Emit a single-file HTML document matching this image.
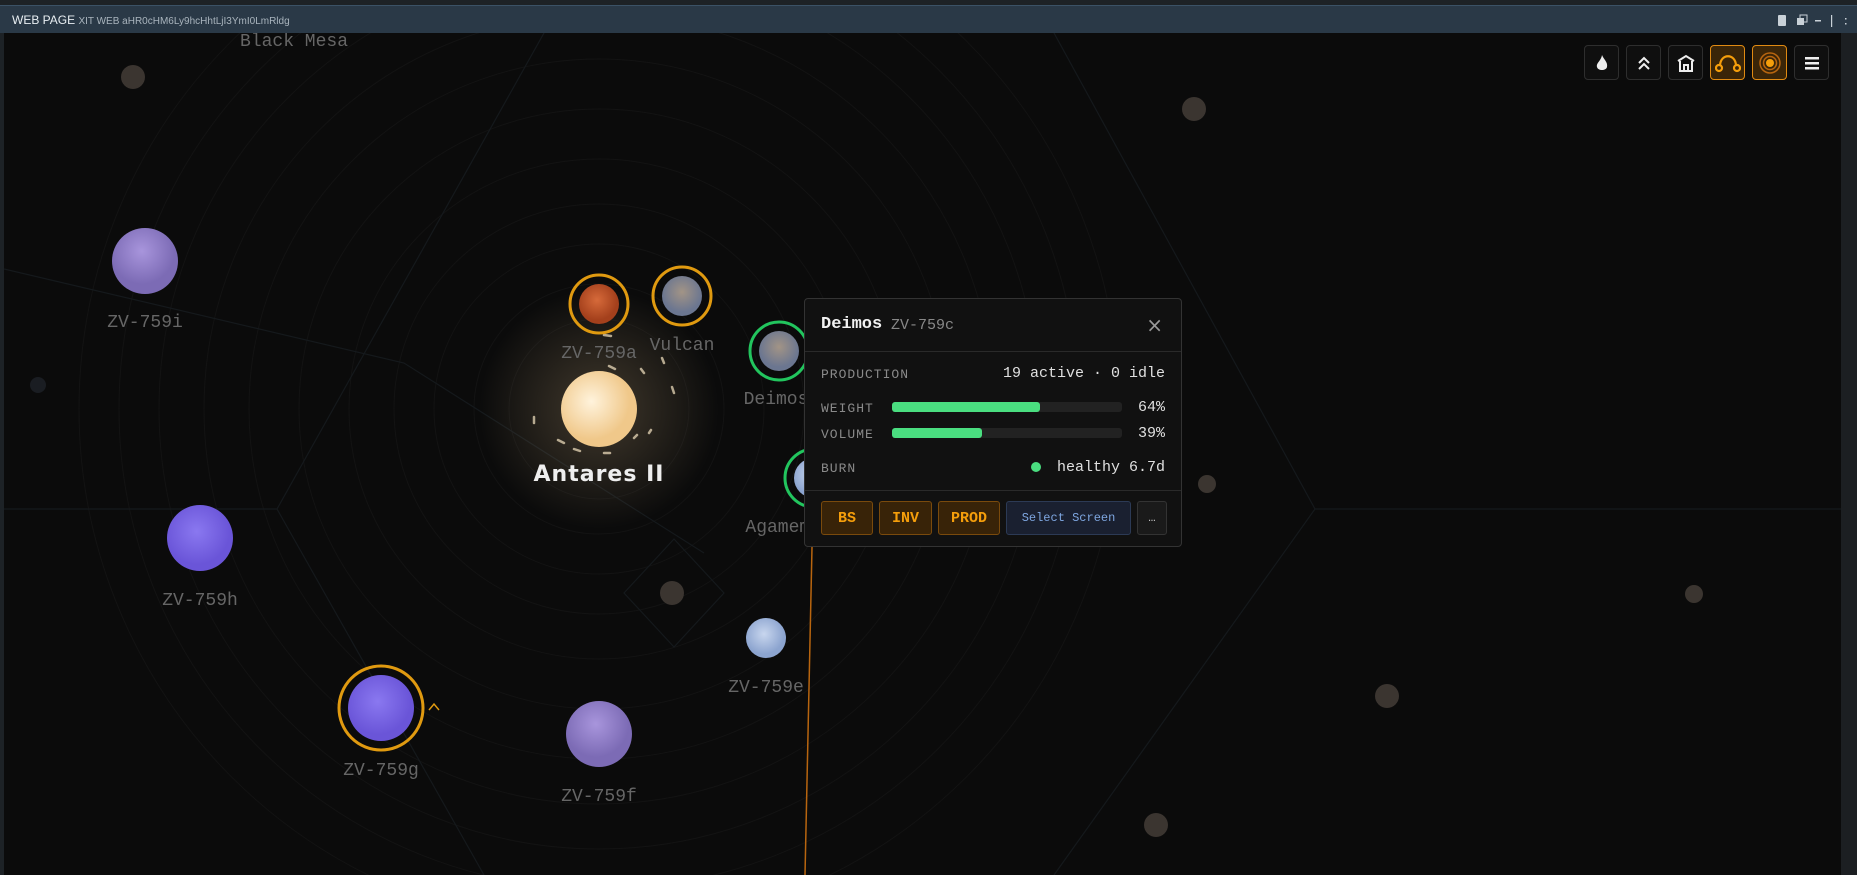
<!DOCTYPE html>
<html><head><meta charset="utf-8"><style>
*{margin:0;padding:0;box-sizing:border-box}
html,body{width:1857px;height:875px;overflow:hidden}
body{background:#1d2226;font-family:"Liberation Mono",monospace;position:relative}
.tb{position:absolute;left:0;top:5px;width:1857px;height:28px;background:#2a3947;border-top:1px solid #3b5266}
.tb .t{position:absolute;left:12px;top:7px;font-family:"Liberation Sans",sans-serif;font-size:12px;color:#e8eef2}
.tb .t small{font-size:10px;color:#a9b4bd}
.map{position:absolute;left:4px;top:33px;width:1837px;height:842px;background:#0b0b0b;overflow:hidden}
.sb{position:absolute;left:1841px;top:33px;width:16px;height:842px;background:#1c1f22}
.lbl{position:absolute;transform:translateX(-50%);font-size:18px;color:#666;white-space:nowrap}
.btn{position:absolute;top:45px;width:35px;height:35px;border:1px solid #2e2e2e;border-radius:4px;background:#0f0f0f;display:flex;align-items:center;justify-content:center}
.btn.on{border-color:#e08a12;background:#3a2508}
.pop{position:absolute;left:804px;top:298px;width:378px;height:249px;background:#111;border:1px solid #333;border-radius:4px;color:#ddd}
.pop .h{height:53px;border-bottom:1px solid #2a2a2a;position:relative}
.k{position:absolute;font-size:13px;color:#8a8a8a;letter-spacing:1px}
.v{position:absolute;font-size:15px;color:#e0e0e0;right:16px}
.bar{position:absolute;left:87px;width:230px;height:10px;background:#222;border-radius:3px}
.bar i{display:block;height:10px;background:#4ade80;border-radius:3px}
.b{position:absolute;top:202px;height:34px;border:1px solid #7a4a0c;background:#382308;color:#f59e0b;font-weight:bold;font-size:15px;display:flex;align-items:center;justify-content:center;border-radius:3px}
</style></head><body>
<div class="tb"><div class="t">WEB PAGE <small>XIT WEB aHR0cHM6Ly9hcHhtLjI3YmI0LmRldg</small></div>
<svg style="position:absolute;left:1775px;top:8px" width="80" height="14" fill="#c9d1d8"><rect x="3" y="1" width="8" height="11" rx="1"/><rect x="22" y="4" width="7" height="7"/><rect x="25" y="1" width="7" height="7" fill="none" stroke="#c9d1d8"/><rect x="40" y="6" width="6" height="1.5"/><rect x="56" y="1" width="1.2" height="12"/><rect x="70" y="4" width="1.5" height="1.5"/><rect x="70" y="9" width="1.5" height="1.5"/></svg></div>
<div class="map">
<svg width="1837" height="842" style="position:absolute;left:0;top:0">
<defs>
<radialGradient id="glow"><stop offset="0" stop-color="#ffd9a0" stop-opacity=".22"/><stop offset="1" stop-color="#ffd9a0" stop-opacity="0"/></radialGradient>
<radialGradient id="star" cx=".4" cy=".4"><stop offset="0" stop-color="#fff3dc"/><stop offset="1" stop-color="#f0c88a"/></radialGradient>
<radialGradient id="pu" cx=".45" cy=".35"><stop offset="0" stop-color="#a895dc"/><stop offset="1" stop-color="#7c6bb5"/></radialGradient>
<radialGradient id="bl" cx=".45" cy=".4"><stop offset="0" stop-color="#8a78f0"/><stop offset="1" stop-color="#6a55d8"/></radialGradient>
<radialGradient id="rd" cx=".45" cy=".4"><stop offset="0" stop-color="#d66a3a"/><stop offset="1" stop-color="#a4401c"/></radialGradient>
<radialGradient id="gr" cx=".5" cy=".4"><stop offset="0" stop-color="#a29486"/><stop offset="1" stop-color="#6b7690"/></radialGradient>
<radialGradient id="lb" cx=".45" cy=".4"><stop offset="0" stop-color="#c8d6ee"/><stop offset="1" stop-color="#8ca4cf"/></radialGradient>
</defs>
<g fill="none" stroke="#131313" stroke-width="1">
<circle cx="595" cy="376" r="90"/><circle cx="595" cy="376" r="125"/><circle cx="595" cy="376" r="165"/><circle cx="595" cy="376" r="205"/><circle cx="595" cy="376" r="250"/><circle cx="595" cy="376" r="300"/><circle cx="595" cy="376" r="350"/><circle cx="595" cy="376" r="395"/><circle cx="595" cy="376" r="440"/><circle cx="595" cy="376" r="480"/><circle cx="595" cy="376" r="520"/>
</g>
<g fill="none" stroke="#15191c" stroke-width="1.2">
<path d="M0 476 H273 L540 0"/><path d="M273 476 L480 842"/><path d="M0 236 L400 330 L700 520"/><path d="M1050 0 L1311 476 L1050 842"/><path d="M1311 476 H1837"/>
<path d="M670 506 L720 560 L670 614 L620 560 Z"/>
</g>
<circle cx="595" cy="376" r="120" fill="url(#glow)"/>
<circle cx="595" cy="376" r="38" fill="url(#star)"/>
<g stroke="#e8d8b8" stroke-width="2.5" stroke-linecap="round" opacity=".75"><path d="M605 333 l6 3"/><path d="M670 360 l-2 -6"/><path d="M640 340 l-3 -4"/><path d="M530 390 l0 -6"/><path d="M570 416 l6 2"/><path d="M600 420 l6 0"/><path d="M630 405 l3 -3"/><path d="M645 400 l2 -3"/><path d="M560 410 l-6 -3"/><path d="M600 302 l7 1"/><path d="M660 330 l-2 -5"/></g>
<g fill="#3b3530"><circle cx="129" cy="44" r="12"/><circle cx="1190" cy="76" r="12"/><circle cx="1203" cy="451" r="9"/><circle cx="1690" cy="561" r="9"/><circle cx="1383" cy="663" r="12"/><circle cx="1152" cy="792" r="12"/><circle cx="668" cy="560" r="12"/></g>
<circle cx="34" cy="352" r="8" fill="#1a1d22"/>
<circle cx="141" cy="228" r="33" fill="url(#pu)"/>
<circle cx="196" cy="505" r="33" fill="url(#bl)"/>
<circle cx="377" cy="675" r="33" fill="url(#bl)"/><circle cx="377" cy="675" r="42" fill="none" stroke="#e09a10" stroke-width="3"/>
<circle cx="595" cy="701" r="33" fill="url(#pu)"/>
<circle cx="762" cy="605" r="20" fill="url(#lb)"/>
<circle cx="595" cy="271" r="20" fill="url(#rd)"/><circle cx="595" cy="271" r="29" fill="none" stroke="#e09a10" stroke-width="3"/>
<circle cx="678" cy="263" r="20" fill="url(#gr)"/><circle cx="678" cy="263" r="29" fill="none" stroke="#e09a10" stroke-width="3"/>
<circle cx="775" cy="318" r="20" fill="url(#gr)"/><circle cx="775" cy="318" r="29" fill="none" stroke="#22c55e" stroke-width="3"/>
<circle cx="810" cy="445" r="20" fill="url(#lb)"/><circle cx="810" cy="445" r="29" fill="none" stroke="#22c55e" stroke-width="3"/>
<path d="M425 677 l5 -6 l5 6" fill="none" stroke="#e09a10" stroke-width="1.5"/>
<path d="M808 514 L801 842" stroke="#b8650f" stroke-width="1.5"/>
</svg>
<div class="lbl" style="left:290px;top:-1px">Black Mesa</div>
<div class="lbl" style="left:141px;top:280px">ZV-759i</div>
<div class="lbl" style="left:196px;top:558px">ZV-759h</div>
<div class="lbl" style="left:377px;top:728px">ZV-759g</div>
<div class="lbl" style="left:595px;top:754px">ZV-759f</div>
<div class="lbl" style="left:762px;top:645px">ZV-759e</div>
<div class="lbl" style="left:595px;top:311px">ZV-759a</div>
<div class="lbl" style="left:678px;top:303px">Vulcan</div>
<div class="lbl" style="left:772px;top:357px">Deimos</div>
<div class="lbl" style="left:790px;top:485px">Agamemnon</div>
<div class="lbl" style="left:595px;top:429px;font-family:'DejaVu Sans',sans-serif;font-size:22px;color:#eee;font-weight:bold;letter-spacing:1px">Antares II</div>
</div>
<div class="sb"></div>
<div class="btn" style="left:1584px"><svg width="14" height="18"><path d="M7 1 C9 6 13 8 12 13 C11 17 3 17 2 13 C1 9 6 7 7 1Z" fill="#eee"/></svg></div>
<div class="btn" style="left:1626px"><svg width="16" height="16" fill="none" stroke="#eee" stroke-width="2"><path d="M3 8 L8 3 L13 8 M3 14 L8 9 L13 14"/></svg></div>
<div class="btn" style="left:1668px"><svg width="20" height="18" fill="none" stroke="#eee" stroke-width="2"><path d="M2 7 L10 2 L18 7 M4 7 V17 H16 V7 M8 17 V11 H12 V17"/></svg></div>
<div class="btn on" style="left:1710px"><svg width="26" height="20" fill="none" stroke="#f59e0b" stroke-width="2.2"><path d="M5 13 C5 0 21 0 21 13"/><circle cx="4" cy="15" r="3"/><circle cx="22" cy="15" r="3"/></svg></div>
<div class="btn on" style="left:1752px"><svg width="24" height="24"><circle cx="12" cy="12" r="10" fill="none" stroke="#b8650f" stroke-width="1.5"/><circle cx="12" cy="12" r="6.5" fill="none" stroke="#b8650f" stroke-width="1.5"/><circle cx="12" cy="12" r="4" fill="#f59e0b"/></svg></div>
<div class="btn" style="left:1794px"><svg width="14" height="14" fill="#eee"><rect y="1" width="14" height="2.5"/><rect y="6" width="14" height="2.5"/><rect y="11" width="14" height="2.5"/></svg></div>
<div class="pop">
<div class="h"><span style="position:absolute;left:16px;top:16px;font-size:17px;font-weight:bold;color:#f2f2f2">Deimos</span><span style="position:absolute;left:86px;top:18px;font-size:15px;color:#888">ZV-759c</span><span style="position:absolute;right:18px;top:14px;font-size:20px;color:#999;font-family:'DejaVu Sans',sans-serif">×</span></div>
<div class="k" style="left:16px;top:68px">PRODUCTION</div><div class="v" style="top:66px">19 active · 0 idle</div>
<div class="k" style="left:16px;top:102px">WEIGHT</div><div class="bar" style="top:103px"><i style="width:148px"></i></div><div class="v" style="top:100px">64%</div>
<div class="k" style="left:16px;top:128px">VOLUME</div><div class="bar" style="top:129px"><i style="width:90px"></i></div><div class="v" style="top:126px">39%</div>
<div class="k" style="left:16px;top:162px">BURN</div><div style="position:absolute;left:226px;top:163px;width:10px;height:10px;border-radius:50%;background:#4ade80"></div><div class="v" style="top:160px">healthy 6.7d</div>
<div style="position:absolute;left:0;right:0;top:191px;border-top:1px solid #2a2a2a"></div>
<div class="b" style="left:16px;width:52px">BS</div>
<div class="b" style="left:74px;width:53px">INV</div>
<div class="b" style="left:133px;width:62px">PROD</div>
<div class="b" style="left:201px;width:125px;background:#1a2030;border-color:#2c3a55;color:#7ea6e0;font-weight:normal;font-size:12px">Select Screen</div>
<div class="b" style="left:332px;width:30px;background:#1a1a1a;border-color:#333;color:#ccc;font-weight:normal;font-size:12px">…</div>
</div>
</body></html>
